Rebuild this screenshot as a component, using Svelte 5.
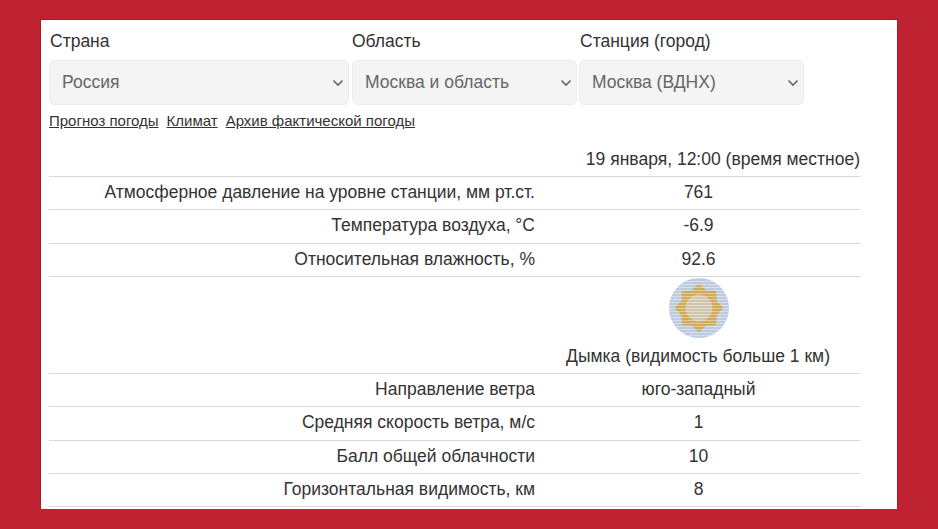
<script>
	const selects = [
		{ label: 'Страна', value: 'Россия', cls: 'country' },
		{ label: 'Область', value: 'Москва и область', cls: 'region' },
		{ label: 'Станция (город)', value: 'Москва (ВДНХ)', cls: 'station' }
	];
	const links = ['Прогноз погоды', 'Климат', 'Архив фактической погоды'];
	const topRows = [
		['Атмосферное давление на уровне станции, мм рт.ст.', '761'],
		['Температура воздуха, °C', '-6.9'],
		['Относительная влажность, %', '92.6']
	];
	const bottomRows = [
		['Направление ветра', 'юго-западный'],
		['Средняя скорость ветра, м/с', '1'],
		['Балл общей облачности', '10'],
		['Горизонтальная видимость, км', '8']
	];
	const stripes = Array.from({ length: 21 }, (_, i) => i * 3);
	// sun outline: eight points around the centre
	const sun = Array.from({ length: 16 }, (_, i) => {
		const a = (i * Math.PI) / 8 - Math.PI / 2;
		const r = i % 2 ? 18 : 23;
		return `${(30 + r * Math.cos(a)).toFixed(1)},${(30 + r * Math.sin(a)).toFixed(1)}`;
	}).join(' ');
</script>

<div class="card">
	<div class="filters">
		{#each selects as s}
			<div class="field {s.cls}">
				<label for={s.cls}>{s.label}</label>
				<div class="select-wrap">
					<select id={s.cls}>
						<option>{s.value}</option>
					</select>
					<svg class="chevron" width="12" height="8" viewBox="0 0 12 8" aria-hidden="true">
						<path d="M1.5 1.5 L6 6 L10.5 1.5" fill="none" stroke="#666" stroke-width="1.6" />
					</svg>
				</div>
			</div>
		{/each}
	</div>
	<nav>
		{#each links as l}
			<a href="#top">{l}</a>
		{/each}
	</nav>
	<table>
		<thead>
			<tr>
				<th></th>
				<th class="date">19 января, 12:00 (время местное)</th>
			</tr>
		</thead>
		<tbody>
			{#each topRows as [name, value]}
				<tr>
					<td class="name">{name}</td>
					<td class="value">{value}</td>
				</tr>
			{/each}
			<tr>
				<td></td>
				<td class="value weather">
					<svg width="60" height="60" viewBox="0 0 60 60" aria-hidden="true">
						<defs>
							<clipPath id="disc"><circle cx="30" cy="30" r="30" /></clipPath>
						</defs>
						<circle cx="30" cy="30" r="30" fill="#bccbe0" />
						<polygon points={sun} fill="#d0aa58" stroke="#d0aa58" stroke-width="2" stroke-linejoin="round" />
						<circle cx="30" cy="30" r="13.5" fill="#d0c6ae" />
						<g clip-path="url(#disc)">
							{#each stripes as y}
								<rect x="0" {y} width="60" height="1" fill="#fff" opacity="0.4" />
							{/each}
						</g>
					</svg>
					<div>Дымка (видимость больше 1 км)</div>
				</td>
			</tr>
			{#each bottomRows as [name, value]}
				<tr>
					<td class="name">{name}</td>
					<td class="value">{value}</td>
				</tr>
			{/each}
		</tbody>
	</table>
</div>

<style>
	:global(body) {
		margin: 0;
		background: #bf2231;
		font-family: "Liberation Sans", Arial, sans-serif;
		color: #333;
	}
	.card {
		box-sizing: border-box;
		width: 856px;
		height: 489px;
		margin: 20px 0 0 41px;
		padding: 9px 8px 0;
		background: #fff;
		box-shadow: 0 0 0 1px #a81c2a;
		overflow: hidden;
	}
	.filters {
		display: flex;
	}
	.field {
		display: flex;
		flex-direction: column;
	}
	.country {
		width: 303px;
	}
	.region {
		width: 227px;
	}
	.station {
		width: 225px;
	}
	label {
		padding-left: 1px;
		font-size: 17.5px;
		line-height: 24px;
		margin-bottom: 7px;
	}
	.region label {
		padding-left: 0;
	}
	.select-wrap {
		position: relative;
	}
	select {
		display: block;
		box-sizing: border-box;
		width: 100%;
		height: 45px;
		padding: 0 12px 2px;
		border: 1px solid #ececec;
		border-radius: 6px;
		background-color: #f4f4f4;
		color: #666;
		font: 17.5px "Liberation Sans", Arial, sans-serif;
		appearance: none;
	}
	.chevron {
		position: absolute;
		right: 5px;
		top: 19px;
		pointer-events: none;
	}
	.country .select-wrap {
		width: 300px;
	}
	.region .select-wrap {
		width: 225px;
	}
	.station .select-wrap {
		width: 225px;
	}
	nav {
		display: flex;
		gap: 8px;
		margin-top: 6px;
		font-size: 15px;
		line-height: 20px;
	}
	nav a {
		color: #333;
	}
	table {
		width: 812px;
		margin-top: 12px;
		border-collapse: collapse;
		table-layout: fixed;
		font-size: 17.5px;
		line-height: 24px;
	}
	tr {
		border-bottom: 1px solid #d8d8d8;
	}
	th {
		padding: 0;
	}
	th:first-child {
		width: 486px;
	}
	.date {
		padding: 4px 1px 5px 0;
		font-weight: normal;
		text-align: right;
		white-space: nowrap;
	}
	td {
		padding: 3px 0 5.34px;
	}
	.name {
		text-align: right;
	}
	.value {
		padding-left: 1px;
		text-align: center;
	}
	.weather {
		padding: 0;
	}
	.weather svg {
		display: block;
		margin: 1px 0 6px calc(50% - 29px);
	}
	.weather div {
		padding-bottom: 5px;
	}
</style>
